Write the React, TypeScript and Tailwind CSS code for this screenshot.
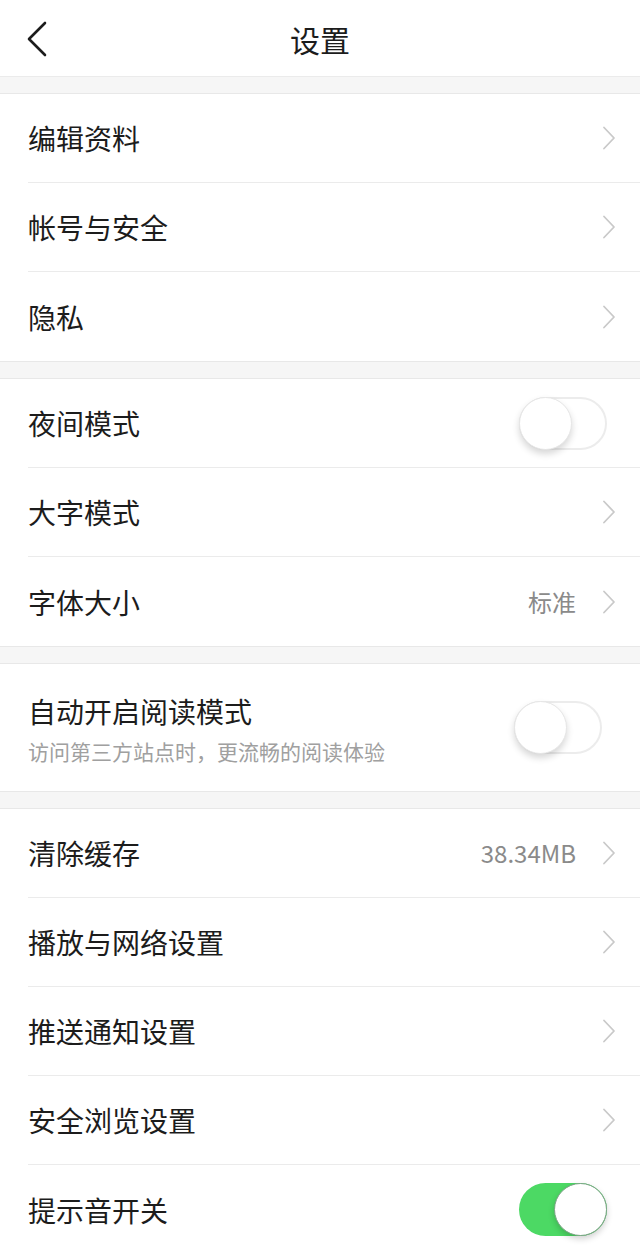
import React from "react";

const font = { fontFamily: '"Noto Sans CJK SC", "Noto Sans", sans-serif' };

function Chevron() {
  return (
    <svg width="14" height="24" viewBox="0 0 14 24" fill="none" className="shrink-0">
      <path d="M2 1.5 L12 12 L2 22.5" stroke="#c9c9c9" strokeWidth="1.8" strokeLinecap="round" strokeLinejoin="round" />
    </svg>
  );
}

function Toggle({ on }: { on?: boolean }) {
  if (on) {
    return (
      <div className="relative h-[53px] w-[88px] rounded-full bg-[#4cd964]">
        <div className="absolute right-0 top-0 h-[53px] w-[53px] rounded-full border border-[#7aa384] bg-white shadow-[0_3px_6px_rgba(0,0,0,0.18)]" />
      </div>
    );
  }
  return (
    <div className="relative h-[53px] w-[88px] rounded-full border-2 border-[#ececec] bg-white">
      <div className="absolute -left-[2px] -top-[2px] h-[53px] w-[53px] rounded-full border border-[#e6e6e6] bg-white shadow-[0_4px_7px_rgba(0,0,0,0.16)]" />
    </div>
  );
}

function Row({ label, value, toggle, on, last }: { label: string; value?: string; toggle?: boolean; on?: boolean; last?: boolean }) {
  return (
    <div className="pl-[28px]">
      <div
        className={
          "flex h-[89px] items-center justify-between " +
          (toggle ? "pr-[33px] " : "pr-[24px] ") +
          (last ? "" : "border-b border-[#ebebeb]")
        }
      >
        <span className="text-[28px] text-[#1c1c1c]">{label}</span>
        {toggle ? (
          <Toggle on={on} />
        ) : (
          <div className="flex items-center gap-[26px]">
            {value && <span className="text-[24px] text-[#8a8a8a]">{value}</span>}
            <Chevron />
          </div>
        )}
      </div>
    </div>
  );
}

function Band() {
  return <div className="h-[16px] bg-[#f6f6f6]" />;
}

function Section({ children }: { children: React.ReactNode }) {
  return <div className="border-y border-[#e8e8e8] bg-white">{children}</div>;
}

export default function App() {
  return (
    <div className="min-h-[1251px] w-[640px] overflow-hidden bg-white" style={font}>
      {/* Header */}
      <div className="relative flex h-[77px] items-center justify-center border-b border-[#ebebeb]">
        <svg width="22" height="36" viewBox="0 0 22 36" fill="none" className="absolute left-[26px] top-[21px]">
          <path d="M19 2 L3 18 L19 34" stroke="#1c1c1c" strokeWidth="2.6" strokeLinecap="round" strokeLinejoin="round" />
        </svg>
        <span className="pt-[2px] text-[30px] text-[#1c1c1c]">设置</span>
      </div>
      <Band />
      <Section>
        <Row label="编辑资料" />
        <Row label="帐号与安全" />
        <Row label="隐私" last />
      </Section>
      <Band />
      <Section>
        <Row label="夜间模式" toggle />
        <Row label="大字模式" />
        <Row label="字体大小" value="标准" last />
      </Section>
      <Band />
      <Section>
        <div className="flex h-[127px] items-center justify-between pl-[28px] pr-[38px]">
          <div className="flex flex-col pt-[2px]">
            <span className="text-[28px] leading-[40px] text-[#1c1c1c]">自动开启阅读模式</span>
            <span className="mt-[4px] text-[21px] leading-[32px] text-[#a0a0a0]">访问第三方站点时，更流畅的阅读体验</span>
          </div>
          <Toggle />
        </div>
      </Section>
      <Band />
      <div className="border-t border-[#e8e8e8] bg-white">
        <Row label="清除缓存" value="38.34MB" />
        <Row label="播放与网络设置" />
        <Row label="推送通知设置" />
        <Row label="安全浏览设置" />
        <Row label="提示音开关" toggle on last />
      </div>
    </div>
  );
}
